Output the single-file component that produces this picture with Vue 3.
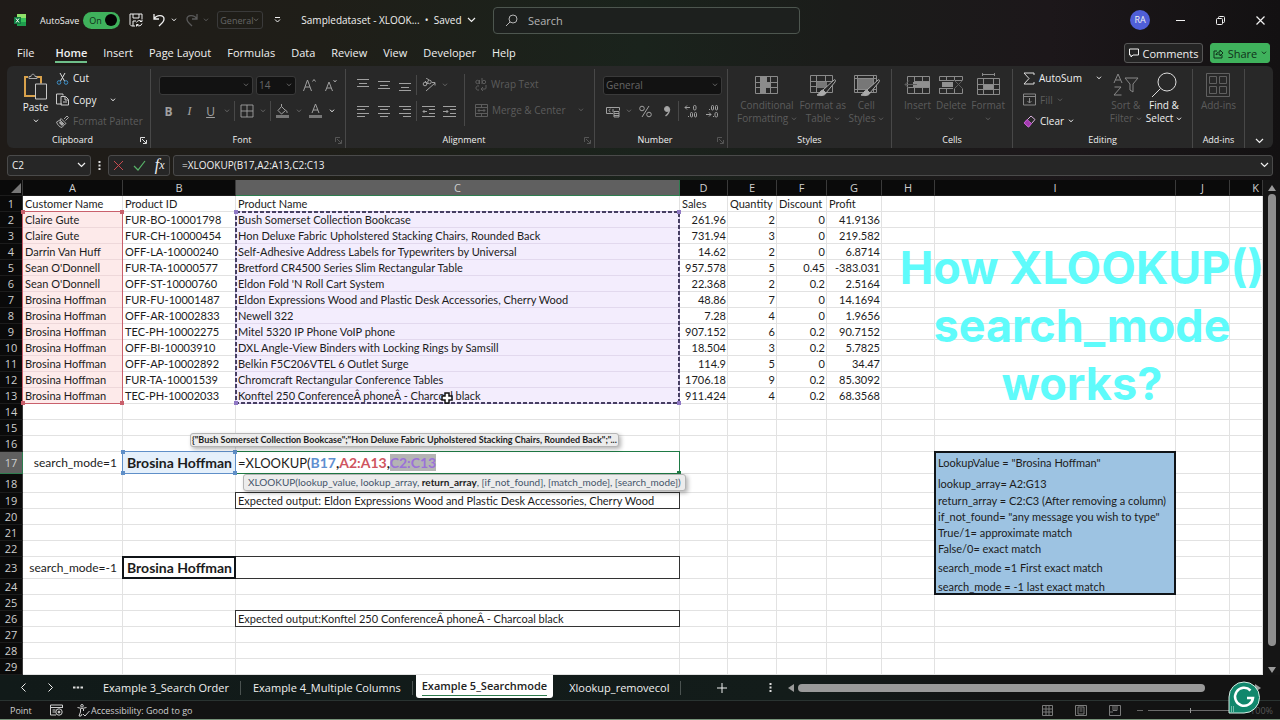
<template>
  <div class="workbook">
    <header class="title-bar">
      <div class="title-left">
        <Icon name="excel" class="app-logo" />
        <label class="autosave">
          <span>AutoSave</span>
          <input type="checkbox" checked class="sr-only" />
          <span class="toggle">On<i class="knob"></i></span>
        </label>
        <button class="plain save" aria-label="Save"><Icon name="save" /></button>
        <button class="plain" aria-label="Undo"><Icon name="undo" /><Icon name="chev" /></button>
        <button class="plain dim" aria-label="Redo"><Icon name="redo" /><Icon name="chev" /></button>
        <span class="picker quick-format">
          <select aria-label="Quick number format"><option>General</option></select>
          <Icon name="chev" />
        </span>
        <button class="plain customize" aria-label="Customize toolbar"><Icon name="customize" /></button>
        <button class="plain doc-name">Sampledataset - XLOOK... &nbsp;•&nbsp; Saved <Icon name="chevWide" /></button>
      </div>
      <label class="search">
        <Icon name="search" />
        <input type="text" placeholder="Search" aria-label="Search" />
      </label>
      <div class="window-controls">
        <span class="avatar">RA</span>
        <button class="plain" aria-label="Minimize"><Icon name="minimize" /></button>
        <button class="plain" aria-label="Restore"><Icon name="restore" /></button>
        <button class="plain" aria-label="Close"><Icon name="close" /></button>
      </div>
    </header>

    <nav class="menu">
      <button v-for="m in menus" :key="m" class="menu-item" :class="{ active: m === 'Home' }">{{ m }}</button>
      <span class="spacer"></span>
      <button class="comments"><Icon name="comment" />Comments</button>
      <button class="share"><Icon name="share" />Share<Icon name="chev" /></button>
    </nav>

    <section class="ribbon">
      <div class="group">
        <div class="group-body clipboard">
          <button class="big paste"><Icon name="paste" /><span>Paste<br /><Icon name="chev" /></span></button>
          <div class="stack">
            <button class="line"><Icon name="cut" />Cut</button>
            <button class="line"><Icon name="copy" />Copy<Icon name="chev" class="far-chev" /></button>
            <button class="line off"><Icon name="painter" />Format Painter</button>
          </div>
        </div>
        <div class="group-label with-launcher">Clipboard<Icon name="launcher" class="launcher" /></div>
      </div>

      <div class="group">
        <div class="group-body rows">
          <div class="tools font-row">
            <span class="picker font-name"><select aria-label="Font"><option></option></select><Icon name="chev" /></span>
            <span class="picker font-size"><select aria-label="Font size"><option>14</option></select><Icon name="chev" /></span>
            <button class="tool" aria-label="Increase font size"><Icon name="grow" /></button>
            <button class="tool" aria-label="Decrease font size"><Icon name="shrink" /></button>
          </div>
          <div class="tools">
            <button class="tool glyph"><b>B</b></button>
            <button class="tool glyph italic"><i>I</i></button>
            <button class="tool glyph"><u>U</u></button>
            <button class="tool narrow" aria-label="Underline options"><Icon name="chev" /></button>
            <i class="sep"></i>
            <button class="tool" aria-label="Borders"><Icon name="borders" /></button>
            <button class="tool narrow" aria-label="Border options"><Icon name="chev" /></button>
            <i class="sep"></i>
            <button class="tool" aria-label="Fill color"><Icon name="bucket" /></button>
            <button class="tool narrow" aria-label="Fill options"><Icon name="chev" /></button>
            <button class="tool" aria-label="Font color"><Icon name="fontColor" /></button>
            <button class="tool narrow lit" aria-label="Font color options"><Icon name="chev" /></button>
          </div>
        </div>
        <div class="group-label with-launcher">Font<Icon name="launcher" class="launcher dim" /></div>
      </div>

      <div class="group">
        <div class="group-body align">
          <div class="rows">
            <div class="tools">
              <button class="tool" aria-label="Top align"><Icon name="alignTop" /></button>
              <button class="tool" aria-label="Middle align"><Icon name="alignMid" /></button>
              <button class="tool" aria-label="Bottom align"><Icon name="alignBottom" /></button>
              <i class="sep"></i>
              <button class="tool" aria-label="Orientation"><Icon name="orient" /></button>
              <button class="tool narrow" aria-label="Orientation options"><Icon name="chev" /></button>
            </div>
            <div class="tools">
              <button class="tool" aria-label="Align left"><Icon name="left" /></button>
              <button class="tool" aria-label="Center"><Icon name="center" /></button>
              <button class="tool" aria-label="Align right"><Icon name="right" /></button>
              <i class="sep"></i>
              <button class="tool" aria-label="Decrease indent"><Icon name="outdent" /></button>
              <button class="tool" aria-label="Increase indent"><Icon name="indent" /></button>
            </div>
          </div>
          <i class="sep tall"></i>
          <div class="rows wrap-col">
            <button class="line off"><Icon name="wrap" />Wrap Text</button>
            <button class="line off"><Icon name="merge" />Merge &amp; Center<Icon name="chev" class="far-chev" /></button>
          </div>
        </div>
        <div class="group-label with-launcher">Alignment<Icon name="launcher" class="launcher dim" /></div>
      </div>

      <div class="group">
        <div class="group-body rows">
          <div class="tools number-row">
            <span class="picker number-format"><select aria-label="Number format"><option>General</option></select><Icon name="chev" /></span>
          </div>
          <div class="tools">
            <button class="tool" aria-label="Accounting format"><Icon name="money" /></button>
            <button class="tool narrow" aria-label="Accounting options"><Icon name="chev" /></button>
            <button class="tool" aria-label="Percent style"><Icon name="percent" /></button>
            <button class="tool" aria-label="Comma style"><Icon name="comma" /></button>
            <i class="sep"></i>
            <button class="tool" aria-label="Increase decimal"><Icon name="decInc" /></button>
            <button class="tool" aria-label="Decrease decimal"><Icon name="decDec" /></button>
          </div>
        </div>
        <div class="group-label with-launcher">Number<Icon name="launcher" class="launcher dim" /></div>
      </div>

      <div class="group">
        <div class="group-body bigs">
          <button class="big off"><Icon name="conditional" /><span>Conditional<br />Formatting <Icon name="chev" /></span></button>
          <button class="big off"><Icon name="formatTable" /><span>Format as<br />Table <Icon name="chev" /></span></button>
          <button class="big off"><Icon name="cellStyles" /><span>Cell<br />Styles <Icon name="chev" /></span></button>
        </div>
        <div class="group-label">Styles</div>
      </div>

      <div class="group">
        <div class="group-body bigs cells">
          <button class="big off"><Icon name="insert" /><span>Insert<br /><Icon name="chev" /></span></button>
          <button class="big off"><Icon name="delete" /><span>Delete<br /><Icon name="chev" /></span></button>
          <button class="big off"><Icon name="format" /><span>Format<br /><Icon name="chev" /></span></button>
        </div>
        <div class="group-label">Cells</div>
      </div>

      <div class="group">
        <div class="group-body editing">
          <div class="stack">
            <button class="line"><Icon name="sigma" />AutoSum<Icon name="chev" class="far-chev" /></button>
            <button class="line off"><Icon name="fill" />Fill <Icon name="chev" /></button>
            <button class="line"><Icon name="eraser" />Clear <Icon name="chev" /></button>
          </div>
          <button class="big off"><Icon name="sort" /><span>Sort &amp;<br />Filter <Icon name="chev" /></span></button>
          <button class="big"><Icon name="find" /><span>Find &amp;<br />Select <Icon name="chev" /></span></button>
        </div>
        <div class="group-label">Editing</div>
      </div>

      <div class="group">
        <div class="group-body bigs single">
          <button class="big off"><Icon name="addins" /><span>Add-ins</span></button>
        </div>
        <div class="group-label">Add-ins</div>
      </div>
      <button class="plain collapse" aria-label="Collapse ribbon"><Icon name="chevWide" /></button>
    </section>

    <section class="formula-bar">
      <div class="name-box">
        <input type="text" value="C2" aria-label="Name box" />
        <Icon name="chevWide" />
      </div>
      <Icon name="dots" class="grip" />
      <div class="formula-actions">
        <button class="plain" aria-label="Cancel"><Icon name="cancel" /></button>
        <button class="plain" aria-label="Enter"><Icon name="accept" /></button>
        <button class="plain fx" aria-label="Insert function"><i>f</i><sub>x</sub></button>
      </div>
      <div class="formula-input">
        <input type="text" value="=XLOOKUP(B17,A2:A13,C2:C13" aria-label="Formula" />
        <Icon name="chevWide" />
      </div>
    </section>

    <main class="sheet-area">
      <div class="sheet">
        <table>
          <colgroup>
            <col class="col-head" />
            <col v-for="c in columns" :key="c.id" :style="c.w ? { width: c.w + 'px' } : null" />
          </colgroup>
          <thead>
            <tr>
              <th class="corner"><Icon name="corner" /></th>
              <th v-for="c in columns" :key="c.id" :class="{ picked: c.id === 'C', clipped: c.id === 'K' }">{{ c.id }}</th>
            </tr>
          </thead>
          <tbody>
            <tr v-for="(r, i) in rows" :key="i" :style="{ height: r.h + 'px' }">
              <th :class="{ picked: i === 16 }">{{ i + 1 }}</th>
              <td v-for="c in columns" :key="c.id" :class="cellClass(c.id, i + 1)">
                <span v-if="c.id === 'C' && i === 16" class="formula">=XLOOKUP(<b class="ref-blue">B17</b><b>,</b><b class="ref-red">A2:A13</b><b>,</b><b class="ref-purple">C2:C13</b></span>
                <template v-else>{{ r[c.id] }}</template>
              </td>
            </tr>
          </tbody>
        </table>

        <div v-for="r in ranges" :key="r.from" class="range" :class="r.kind" :style="rangeStyle(r.from, r.to)">
          <svg v-if="r.kind === 'marching'" class="ants" width="100%" height="100%" aria-hidden="true">
            <rect width="100%" height="100%" />
          </svg>
          <template v-if="r.handles"><i class="h tl"></i><i class="h tr"></i><i class="h bl"></i></template>
          <i v-if="r.handles || r.kind === 'editing-cell'" class="h br"></i>
        </div>

        <div class="value-tip">{"Bush Somerset Collection Bookcase";"Hon Deluxe Fabric Upholstered Stacking Chairs, Rounded Back";"...</div>
        <div class="syntax-tip">XLOOKUP(lookup_value, lookup_array, <b>return_array</b>, [if_not_found], [match_mode], [search_mode])</div>
        <h1 class="caption">How XLOOKUP()<br />search_mode<br />works?</h1>
        <Icon name="cross" class="cursor" />
      </div>
      <div class="v-scroll"><Icon name="triUp" /><i class="thumb"></i><Icon name="triDown" /></div>
    </main>

    <footer class="sheet-tabs">
      <button class="plain nav" aria-label="Previous sheet"><Icon name="prev" /></button>
      <button class="plain nav" aria-label="Next sheet"><Icon name="next" /></button>
      <button class="plain nav more" aria-label="More sheets"><Icon name="more" /></button>
      <button v-for="t in tabs" :key="t" class="tab" :class="{ current: t === 'Example 5_Searchmode' }"><span>{{ t }}</span></button>
      <button class="plain add" aria-label="New sheet"><Icon name="plus" /></button>
      <Icon name="dots" class="grip" />
      <div class="h-scroll"><Icon name="triLeft" /><i class="thumb"></i></div>
      <Icon name="triRight" class="end-arrow" />
    </footer>

    <div class="status-bar">
      <span class="mode-name">Point</span>
      <Icon name="macro" />
      <button class="plain access"><Icon name="access" />Accessibility: Good to go</button>
      <span class="spacer"></span>
      <button class="plain view" aria-label="Normal view"><Icon name="viewGrid" /></button>
      <button class="plain view" aria-label="Page layout view"><Icon name="viewPage" /></button>
      <button class="plain view" aria-label="Page break view"><Icon name="viewBreak" /></button>
      <button class="plain minus" aria-label="Zoom out"><Icon name="minus" /></button>
      <input type="range" min="0" max="100" value="50" aria-label="Zoom" class="zoom" />
      <span class="percent">100%</span>
    </div>
    <Icon name="grammarly" class="assistant" />
  </div>
</template>

<script setup>
import { h } from 'vue'

const table = '<path d="M1.500 2.500h22v17h-22zM1.500 8.500h22M1.500 13.500h22M7.500 2.500v17M16.500 2.500v17" stroke="#8a8a8a"/>'
const brush = '<path d="M25 7 14 17l3 3 9-11c1-2 0-3-1-2z" fill="#282828" stroke="#aaa"/><path d="M14 17c-3 0-3 4-6 5 3 1 8 1 9-2z" fill="#aaa" stroke="#aaa"/>'

// name: [width, height, markup]
const icons = {
  excel: [12, 14, '<path d="M3 1h9v12H3z" fill="#1f9d4d" stroke="none"/><path d="M3 1h9v4H3z" fill="#8fe26a" stroke="none"/><path d="M7 5h5v4H7z" fill="#36c25a" stroke="none"/><path d="M0 4h7v7H0z" fill="#107c41" stroke="none"/><path d="m2 5.500 3 4m0-4-3 4" stroke="#fff"/>'],
  save: [14, 14, '<path d="M6 13H2.500L1 11.500V1h12v5M4 1v4h6V1M4 13V8h3"/><path d="M7.500 9.500a3 3 0 0 1 5-1M13 6.500v2h-2M13 10.500a3 3 0 0 1-5 1.500M7.500 13.500v-2h2"/>'],
  undo: [13, 14, '<path d="M1 1v5h5M1 6c3-5 10-4 10 0 0 3-3 5-5 7" stroke-width="1.300"/>'],
  redo: [13, 14, '<path d="M12 1v5H7M12 6C9 1 2 2 2 6c0 3 3 5 5 7" stroke-width="1.300"/>'],
  chev: [6, 4, '<path d="m1 .7 2 2.100 2-2.100"/>'],
  chevWide: [9, 6, '<path d="m1 1 3.500 3.500L8 1" stroke-width="1.200"/>'],
  customize: [7, 6, '<path d="M1 .5h5M1 2.500 3.500 5 6 2.500"/>'],
  search: [13, 13, '<circle cx="8" cy="5" r="4"/><path d="M5 8 1 12"/>'],
  minimize: [9, 9, '<path d="M0 4.500h9"/>'],
  restore: [9, 9, '<rect x=".5" y="2.500" width="6" height="6" rx="1"/><path d="M2.500 2.500v-1q0-1 1-1h4q1 0 1 1v4q0 1-1 1h-1"/>'],
  close: [9, 9, '<path d="m.5.5 8 8m0-8-8 8" stroke-width="1.200"/>'],
  comment: [10, 10, '<path d="M.5 1h9v6H4L2 9V7H.5z"/>'],
  share: [11, 11, '<path d="M4 3H1v7h8V7M3 7c0-2 2-3 4-3V2l3 3-3 3V6C5 6 4 6 3 7z"/>'],
  paste: [25, 27, '<path d="M5 3.500H2v19h10M14 3.500h4V10" stroke="#d9a24c" stroke-width="2"/><path d="M6 5V3h2c0-3 4-3 4 0h2v2z" stroke="#aaa"/><path d="M12.500 10.500h11v15h-11z" stroke="#c8c8c8" fill="#282828"/>'],
  cut: [13, 13, '<path d="M4 1l4.500 8M9 1 4.500 9" stroke="#ddd"/><circle cx="3" cy="10.500" r="1.800" stroke="#3d8fc7"/><circle cx="10" cy="10.500" r="1.800" stroke="#3d8fc7"/>'],
  copy: [13, 13, '<path d="M6 11H.5V1H7v1.500M5 3.500h4.500l3 3V12H5zM9 4v3h3M7 9h4" stroke="#ccc"/>'],
  painter: [13, 13, '<path d="m8 4 3-3 1.500 1.500-3 3M5 3.500l5 5-1.500 1L4 5zM4 5 .5 7c1 3 3 5 5.500 5.500l2.500-3" stroke="#aaa"/><path d="m3 8 3 3 2-2-4-3z" fill="#aaa" stroke="none"/>'],
  launcher: [7, 7, '<path d="M.5 5V.5H5M2 2l4 4M6.500 3v3.500H3" stroke-width=".900"/>'],
  grow: [13, 14, '<path d="m.5 13 4-11 4 11M2 9h5M9.500 3.500l1.500-2 1.500 2"/>'],
  shrink: [13, 14, '<path d="m1.500 13 3.500-9 3.500 9M3 10h4M9.500 2l1.500 2 1.500-2"/>'],
  borders: [14, 14, '<path d="M1 1h12v12H1zM7 1v12M1 7h12" stroke-width=".900"/>'],
  bucket: [13, 14, '<path d="m5.500 2.500 4 4-4 3.500-3.500-3.500zM5.500 2.500V0M9.500 6c2 1 1.500 3 1.500 3"/><path d="M0 11h13v3H0z" fill="#777" stroke="none"/>'],
  fontColor: [13, 14, '<path d="m3 9 3.500-9L10 9M4 6h5"/><path d="M0 11h13v3H0z" fill="#777" stroke="none"/>'],
  alignTop: [12, 14, '<path d="M0 1.500h12M2 5.500h8M0 8.500h12"/>'],
  alignMid: [12, 14, '<path d="M0 3.500h12M2 7.500h8M0 10.500h12"/>'],
  alignBottom: [12, 14, '<path d="M0 5.500h12M2 9.500h8M0 12.500h12"/>'],
  left: [12, 13, '<path d="M0 1.500h12M0 4.500h8M0 8.500h12M0 11.500h8"/>'],
  center: [12, 13, '<path d="M0 1.500h12M2 4.500h8M0 8.500h12M2 11.500h8"/>'],
  right: [12, 13, '<path d="M0 1.500h12M4 4.500h8M0 8.500h12M4 11.500h8"/>'],
  outdent: [13, 13, '<path d="M0 1.500h13M7 4.500h6M7 8.500h6M0 11.500h13M5 6.500H1M2.500 5 1 6.500 2.500 8"/>'],
  indent: [13, 13, '<path d="M0 1.500h13M7 4.500h6M7 8.500h6M0 11.500h13M0 6.500h5M3.500 5 5 6.500 3.500 8"/>'],
  orient: [14, 14, '<circle cx="3" cy="6" r="1.800"/><path d="m3 3 3 3"/><circle cx="7.500" cy="4" r="1.800"/><path d="m4 0 3 2M4 13l9-8M10 4.500h3v3"/>'],
  wrap: [12, 13, '<circle cx="2.500" cy="4" r="1.700"/><path d="M4.500 2v4M7 0v6"/><circle cx="9" cy="4" r="1.700"/><path d="M4 8c-4-1-4 5 0 4M11 7v3q0 1-1 1H6M8 9l-2 2 2 2"/>'],
  merge: [13, 13, '<path d="M.5.5h12v12H.5zM.5 3.500h12M.5 9.500h12M6.500 1v2.500M6.500 9.500V13M3 6.500h7M4.500 5 3 6.500 4.500 8M8.500 5 10 6.500 8.500 8"/>'],
  money: [14, 13, '<path d="M7 8.500H.5v-6h13v3M4.500 7c-2 0-2-3 0-3M7 4v3"/><path d="M8 6.500h5v5.500H8z" fill="#282828"/><path d="M8 8.500h5M8 10.500h5"/>'],
  percent: [13, 13, '<circle cx="3" cy="3.500" r="2.300"/><circle cx="10" cy="9.500" r="2.300"/><path d="M10 1 3 12"/>'],
  comma: [8, 13, '<circle cx="4" cy="4" r="2.500" fill="#a8a8a8"/><path d="M6.500 4c0 4-2 5.500-4 7" stroke-width="1.500"/>'],
  decInc: [14, 14, '<path d="M1 3.500h5M3 1.500l-2 2 2 2M4 12.500h1"/><rect x="9.500" y="1.500" width="2.500" height="4.500" rx="1.200"/><rect x="6.500" y="8.500" width="2" height="4.500" rx="1"/><rect x="10.500" y="8.500" width="2" height="4.500" rx="1"/>'],
  decDec: [14, 14, '<path d="M1 10.500h5M4 8.500l2 2-2 2M4 5.500h1M8 12.500h1"/><rect x="6.500" y="1.500" width="2" height="4.500" rx="1"/><rect x="10.500" y="1.500" width="2" height="4.500" rx="1"/><rect x="10" y="8.500" width="2.500" height="4.500" rx="1.200"/>'],
  conditional: [25, 22, table + '<path d="M6 3h7v5h4v5h-5v6H6z" fill="#8c8c8c" stroke="none"/>'],
  formatTable: [27, 24, table + '<path d="M8 9h10v6H8z" fill="#777" stroke="none"/>' + brush],
  cellStyles: [27, 24, '<path d="M1.500 2.500h22v17h-22zM1.500 5.500h22M4.500 2.500v17M20.500 2.500v17M1.500 16.500h22" stroke="#8a8a8a"/><path d="M5 6h15v10H5z" fill="#777" stroke="none"/>' + brush],
  insert: [27, 22, '<path d="M3.500 2.500h22v17h-22zM3.500 13.500h22M10.500 2.500v17M18.500 2.500v17M10 7.500h16" stroke="#8a8a8a"/><path d="M9 8h17v5H9z" fill="#909090" stroke="none"/><path d="M13 10.500H1M5 6.500l-4 4 4 4"/>'],
  delete: [26, 22, '<path d="M1.500 6.500v-4h23v4M1.500 15v4.500h23V15M8.500 2v4M16.500 2v4M8.500 15v4M16.500 15v4M1 6.500h23M1 14.500h14" stroke="#8a8a8a"/><path d="M4 8h11v5H4z" fill="#909090" stroke="none"/><path d="m16 6 9 9m0-9-9 9"/>'],
  format: [24, 24, '<path d="M1.500 5.500h22v16h-22zM1.500 11.500h22M1.500 16.500h22M7.500 5v16M17.500 5v16M6 1.500h12M6.500 0v3M18.500 0v3" stroke="#8a8a8a"/><path d="M8 12h9v4H8z" fill="#909090" stroke="none"/>'],
  sigma: [12, 13, '<path d="M11 3V1H1l5 5.500L1 12h10v-2" stroke="#ddd"/>'],
  fill: [13, 13, '<path d="M.5 1h12v11H.5zM.5 3.500h12M6.500 5v5M4.500 8l2 2 2-2" stroke="#888"/>'],
  eraser: [13, 13, '<path d="m8 1 4 3.500-6.500 7.500-4.500-4z" stroke="#d9b0de"/><path d="M4 4.500 1 8l4.500 4L8.500 8.500z" fill="#a33ab0" stroke="#c45ad0"/>'],
  sort: [26, 26, '<path d="m1 11 4-9 4 9M2.500 8h5M1.500 15H8l-7 8h7.500M12 6h13l-5 6v8l-3-2v-6z" stroke="#888"/>'],
  find: [26, 26, '<circle cx="16" cy="10" r="9" stroke="#ddd"/><path d="M9.500 16.500 1 25" stroke="#ddd"/>'],
  addins: [24, 26, '<path d="M.5 1.500h23v23H.5zM3.500 4.500h7v7h-7zM13.500 4.500h7v7h-7zM3.500 14.500h7v7h-7zM13.500 14.500h7v7h-7z" stroke="#606060"/>'],
  dots: [3, 13, '<path d="M.5 2h2v2h-2zM.5 5.500h2v2h-2zM.5 9h2v2h-2z" fill="#ddd" stroke="none"/>'],
  cancel: [11, 11, '<path d="m1 1 9 9m0-9-9 9" stroke="#c94a4f"/>'],
  accept: [13, 11, '<path d="m1 6 4 4 7-9" stroke="#58b368" stroke-width="1.200"/>'],
  corner: [12, 12, '<path d="M11 1v10H1z" fill="#777" stroke="none"/>'],
  triUp: [8, 6, '<path d="M4 0 8 6H0z" fill="#9a9a9a" stroke="none"/>'],
  triDown: [8, 6, '<path d="M0 0h8L4 6z" fill="#9a9a9a" stroke="none"/>'],
  triLeft: [6, 8, '<path d="M6 0v8L0 4z" fill="#9a9a9a" stroke="none"/>'],
  triRight: [6, 8, '<path d="M0 0v8l6-4z" fill="#9a9a9a" stroke="none"/>'],
  prev: [5, 9, '<path d="M4.500.5.500 4.500l4 4"/>'],
  next: [5, 9, '<path d="m.5.5 4 4-4 4"/>'],
  more: [10, 3, '<path d="M0 .5h2.500v2H0zM3.700.5h2.500v2H3.700zM7.500.5H10v2H7.500z" fill="#ddd" stroke="none"/>'],
  plus: [10, 10, '<path d="M5 0v10M0 5h10"/>'],
  macro: [13, 12, '<path d="M6 11H.5V1h12v3M.5 3.500h12M2.500 6h3M2.500 8h3"/><circle cx="9" cy="8" r="3.200"/><circle cx="9" cy="8" r="1" fill="#ccc"/>'],
  access: [13, 13, '<circle cx="5" cy="1.800" r="1.300"/><path d="M.5 3.500q4.500 2 9 0M3.500 5v3L2 12M6.500 5v2M6 10l2 2 4.500-5M2 12h2l1-2"/>'],
  viewGrid: [11, 11, '<path d="M.5.5h10v10H.5zM.5 4h10M.5 7h10M4 .5v10M7 .5v10"/>'],
  viewPage: [12, 11, '<path d="M.5.5h11v10H.5zM3 2h6v7H3zM4.500 4h3M4.500 6h3"/>'],
  viewBreak: [12, 11, '<path d="M.5.5h11v10H.5zM4 .5v5h4v-5M.5 7H4M6 .5v5"/>'],
  minus: [6, 3, '<path d="M0 1.500h6"/>'],
  cross: [12, 12, '<path d="M4 1h4v3h3v4H8v3H4V8H1V4h3z" fill="#fff" stroke="#111" stroke-width="1.500"/>'],
  grammarly: [32, 33, '<path d="M16 1a15 15 0 1 1 0 31H1V16A15 15 0 0 1 16 1z" fill="#11876c" stroke="#d7efe6"/><path d="M22.500 9.500a9 9 0 1 0 2.500 7.500h-6" stroke="#fff" stroke-width="2.500"/><path d="M3 26h1M5 26h1M3 28h1M5 28h1M3 30h1M5 30h1" stroke="#d7efe6"/>']
}

const Icon = ({ name }) => {
  const [w, ht, markup] = icons[name]
  return h('svg', {
    width: w,
    height: ht,
    viewBox: `0 0 ${w} ${ht}`,
    fill: 'none',
    stroke: 'currentColor',
    'aria-hidden': 'true',
    innerHTML: markup
  })
}
Icon.props = ['name']

const menus = ['File', 'Home', 'Insert', 'Page Layout', 'Formulas', 'Data', 'Review', 'View', 'Developer', 'Help']
const tabs = ['Example 3_Search Order', 'Example 4_Multiple Columns', 'Example 5_Searchmode', 'Xlookup_removecol']

const HEAD_W = 23
const HEAD_H = 16

// K takes whatever room is left
const columns = [
  { id: 'A', w: 100 },
  { id: 'B', w: 113 },
  { id: 'C', w: 444 },
  { id: 'D', w: 48 },
  { id: 'E', w: 49 },
  { id: 'F', w: 50 },
  { id: 'G', w: 55 },
  { id: 'H', w: 53 },
  { id: 'I', w: 241 },
  { id: 'J', w: 54 },
  { id: 'K' }
]

const orders = [
  ['Customer Name', 'Product ID', 'Product Name', 'Sales', 'Quantity', 'Discount', 'Profit'],
  ['Claire Gute', 'FUR-BO-10001798', 'Bush Somerset Collection Bookcase', '261.96', '2', '0', '41.9136'],
  ['Claire Gute', 'FUR-CH-10000454', 'Hon Deluxe Fabric Upholstered Stacking Chairs, Rounded Back', '731.94', '3', '0', '219.582'],
  ['Darrin Van Huff', 'OFF-LA-10000240', 'Self-Adhesive Address Labels for Typewriters by Universal', '14.62', '2', '0', '6.8714'],
  ["Sean O'Donnell", 'FUR-TA-10000577', 'Bretford CR4500 Series Slim Rectangular Table', '957.578', '5', '0.45', '-383.031'],
  ["Sean O'Donnell", 'OFF-ST-10000760', "Eldon Fold 'N Roll Cart System", '22.368', '2', '0.2', '2.5164'],
  ['Brosina Hoffman', 'FUR-FU-10001487', 'Eldon Expressions Wood and Plastic Desk Accessories, Cherry Wood', '48.86', '7', '0', '14.1694'],
  ['Brosina Hoffman', 'OFF-AR-10002833', 'Newell 322', '7.28', '4', '0', '1.9656'],
  ['Brosina Hoffman', 'TEC-PH-10002275', 'Mitel 5320 IP Phone VoIP phone', '907.152', '6', '0.2', '90.7152'],
  ['Brosina Hoffman', 'OFF-BI-10003910', 'DXL Angle-View Binders with Locking Rings by Samsill', '18.504', '3', '0.2', '5.7825'],
  ['Brosina Hoffman', 'OFF-AP-10002892', 'Belkin F5C206VTEL 6 Outlet Surge', '114.9', '5', '0', '34.47'],
  ['Brosina Hoffman', 'FUR-TA-10001539', 'Chromcraft Rectangular Conference Tables', '1706.18', '9', '0.2', '85.3092'],
  ['Brosina Hoffman', 'TEC-PH-10002033', 'Konftel 250 ConferenceÂ phoneÂ - Charcoal black', '911.424', '4', '0.2', '68.3568']
].map(([A, B, C, D, E, F, G]) => ({ h: 16, A, B, C, D, E, F, G }))

const rows = [
  ...orders,
  { h: 16 },
  { h: 16 },
  { h: 16 },
  { h: 22, A: 'search_mode=1', B: 'Brosina Hoffman', I: 'LookupValue = "Brosina Hoffman"' },
  { h: 19, I: 'lookup_array= A2:G13' },
  { h: 16, C: 'Expected output: Eldon Expressions Wood and Plastic Desk Accessories, Cherry Wood', I: 'return_array = C2:C3 (After removing a column)' },
  { h: 16, I: 'if_not_found= "any message you wish to type"' },
  { h: 16, I: 'True/1= approximate match' },
  { h: 16, I: 'False/0= exact match' },
  { h: 22, A: 'search_mode=-1', B: 'Brosina Hoffman', I: 'search_mode =1 First exact match' },
  { h: 16, I: 'search_mode = -1 last exact match' },
  { h: 16 },
  { h: 16, C: 'Expected output:Konftel 250 ConferenceÂ phoneÂ - Charcoal black' },
  { h: 16 },
  { h: 16 },
  { h: 16 }
]

const ranges = [
  { from: 'A2', to: 'A13', kind: 'red', handles: true },
  { from: 'C2', to: 'C13', kind: 'marching', handles: true },
  { from: 'C17', to: 'C17', kind: 'editing-cell' },
  { from: 'B17', to: 'B17', kind: 'blue', handles: true },
  { from: 'C19', to: 'C19', kind: 'thin' },
  { from: 'C23', to: 'C23', kind: 'thin' },
  { from: 'B23', to: 'B23', kind: 'thick' },
  { from: 'C26', to: 'C26', kind: 'thin' },
  { from: 'I17', to: 'I24', kind: 'thick' }
]

const sum = (list, key) => list.reduce((total, item) => total + item[key], 0)

function rangeStyle(from, to) {
  const c0 = columns.findIndex((c) => c.id === from[0])
  const c1 = columns.findIndex((c) => c.id === to[0])
  const r0 = Number(from.slice(1)) - 1
  const r1 = Number(to.slice(1))
  return {
    left: HEAD_W + sum(columns.slice(0, c0), 'w') - 1 + 'px',
    top: HEAD_H + sum(rows.slice(0, r0), 'h') - 1 + 'px',
    width: sum(columns.slice(c0, c1 + 1), 'w') + 1 + 'px',
    height: sum(rows.slice(r0, r1), 'h') + 1 + 'px'
  }
}

function cellClass(col, row) {
  return {
    pink: col === 'A' && row > 1 && row < 14,
    lilac: col === 'C' && row > 1 && row < 14,
    sky: col === 'B' && row === 17,
    note: col === 'I' && row > 16 && row < 25,
    num: 'DEFG'.includes(col) && row > 1,
    mode: col === 'A' && row > 16,
    strong: col === 'B' && row > 16
  }
}
</script>

<style>
body {
  background: #151515;
}
</style>

<style scoped>
* {
  box-sizing: border-box;
}

.workbook {
  position: relative;
  display: flex;
  flex-direction: column;
  height: 100vh;
  overflow: hidden;
  border-bottom: 1px solid #78937a;
  background: linear-gradient(90deg, #1f1b18 0%, #1f1e18 25%, #1a231c 50%, #1b1c1a 66%, #1c171a 82%, #131112 100%);
  color: #f0f0f0;
  font-family: 'Open Sans', 'Noto Sans', sans-serif;
  font-size: 10px;
}

button,
input,
select {
  margin: 0;
  padding: 0;
  border: 0;
  background: none;
  color: inherit;
  font: inherit;
  outline: none;
}

svg {
  flex: none;
}

.plain {
  display: flex;
  align-items: center;
}

.spacer {
  flex: 1;
}

.sr-only {
  position: absolute;
  opacity: 0;
}

.dim {
  color: #5a5a5a;
}

/* title bar */
.title-bar {
  display: grid;
  grid-template-columns: 493fr 307fr 480fr;
  align-items: center;
  height: 40px;
}

.title-left {
  display: flex;
  align-items: center;
  padding-left: 14px;
  white-space: nowrap;
}

.autosave {
  display: flex;
  align-items: center;
  gap: 4px;
  margin: 0 9px 0 14px;
  font-size: 9px;
}

.toggle {
  display: flex;
  align-items: center;
  justify-content: space-between;
  width: 37px;
  height: 17px;
  padding: 0 3px 0 6px;
  border-radius: 9px;
  background: #3fb25c;
  color: #10301a;
}

.knob {
  width: 12px;
  height: 12px;
  border-radius: 50%;
  background: #050505;
}

.title-left .plain {
  gap: 5px;
  margin-right: 8px;
}

.title-left .save {
  margin-right: 10px;
}

.picker {
  position: relative;
  display: flex;
  flex: none;
  align-items: center;
  border: 1px solid #3a3a3a;
  border-radius: 3px;
  background: #121212;
  color: #666;
}

.picker select {
  flex: 1;
  min-width: 0;
  height: 100%;
  padding-left: 2px;
  appearance: none;
}

.picker svg {
  position: absolute;
  right: 3px;
  pointer-events: none;
}

.quick-format {
  width: 46px;
  height: 18px;
  font-size: 9px;
  background: transparent;
}

.title-left .customize {
  margin: 0 20px 0 11px;
}

.doc-name {
  font-size: 10px;
}

.search {
  display: flex;
  align-items: center;
  gap: 10px;
  height: 27px;
  padding: 0 11px;
  border: 1px solid #4d564f;
  border-radius: 4px;
  background: #1d201e;
  color: #b4b4b4;
}

.search input {
  flex: 1;
  font-size: 11px;
}

.search input::placeholder {
  color: #b4b4b4;
}

.window-controls {
  display: flex;
  align-items: center;
  justify-content: flex-end;
  gap: 31px;
  padding-right: 15px;
}

.avatar {
  width: 20px;
  height: 20px;
  margin-right: -5px;
  border-radius: 50%;
  background: #4f5fd8;
  font-size: 9px;
  line-height: 20px;
  text-align: center;
}

/* menu */
.menu {
  display: flex;
  align-items: center;
  gap: 16px;
  height: 26px;
  padding: 0 10px 0 17px;
}

.menu-item {
  height: 20px;
  border-bottom: 2px solid transparent;
  font-size: 11px;
  line-height: 20px;
}

.menu-item:first-child {
  margin-right: 5px;
}

.menu-item.active {
  border-color: #6fbf8a;
  font-weight: 600;
}

.comments,
.share {
  display: flex;
  align-items: center;
  justify-content: center;
  gap: 4px;
  height: 20px;
  border: 1px solid #565656;
  border-radius: 3px;
  font-size: 11px;
}

.comments {
  width: 79px;
  background: #242424;
}

.share {
  width: 60px;
  margin-left: -9px;
  border-color: #3fb25c;
  background: #3fb25c;
  color: #10301a;
}

/* ribbon */
.ribbon {
  display: grid;
  grid-template-columns: 144fr 195fr 249fr 133fr 164fr 121fr 180fr 52fr 28fr;
  height: 82px;
  margin: 0 7px;
  border-radius: 6px;
  background: #282828;
}

.group {
  display: flex;
  flex-direction: column;
  min-width: 0;
  margin: 3px 0 5px;
  border-right: 1px solid #484848;
}

.group-body {
  display: flex;
  height: 62px;
}

.group-label {
  position: relative;
  font-size: 9px;
  line-height: 17px;
  text-align: center;
}

.with-launcher {
  padding-right: 12px;
}

.group-label .launcher {
  position: absolute;
  right: 3px;
  top: 6px;
}

.stack {
  display: flex;
  flex: 1;
  flex-direction: column;
  justify-content: space-between;
  padding-bottom: 1px;
}

.line {
  display: flex;
  align-items: center;
  gap: 4px;
  height: 18px;
  white-space: nowrap;
}

.far-chev {
  margin-left: 10px;
}

.off {
  color: #5c5c5c;
}

.big {
  display: flex;
  flex-direction: column;
  align-items: center;
  line-height: 13px;
  white-space: nowrap;
}

.big > svg {
  height: 28px;
}

.big span svg {
  vertical-align: middle;
}

.clipboard {
  gap: 7px;
  padding-left: 15px;
}

.paste {
  width: 27px;
  padding-top: 4px;
}

.rows {
  flex-direction: column;
  padding: 6px 7px 0;
}

.tools {
  display: flex;
  align-items: center;
  height: 26px;
  color: #a0a0a0;
}

.rows .tools:first-child {
  height: 20px;
  margin-bottom: 3px;
}

.font-row,
.number-row {
  padding-left: 1px;
}

.tool {
  display: flex;
  flex: none;
  align-items: center;
  justify-content: center;
  width: 21px;
  height: 20px;
}

.glyph {
  font-size: 12px;
}

.italic {
  font-family: 'Liberation Serif', serif;
  font-size: 13px;
}

.narrow {
  width: 12px;
  color: #666;
}

.lit {
  color: #f0f0f0;
}

.sep {
  flex: none;
  width: 1px;
  height: 20px;
  margin: 0 1px;
  background: #484848;
}

.tall {
  height: 52px;
  margin-top: 5px;
}

.font-name {
  width: 94px;
  height: 19px;
  margin-right: 3px;
}

.font-size {
  width: 40px;
  height: 19px;
  margin-right: 3px;
}

.number-format {
  width: 119px;
  height: 19px;
}

.align .rows:first-child {
  width: 117px;
  padding-right: 0;
  padding-left: 6px;
}

.wrap-col {
  display: flex;
  gap: 8px;
  padding-left: 9px;
}

.wrap-col .far-chev {
  margin-left: 8px;
}

.bigs {
  justify-content: space-between;
  padding: 2px 7px 0 9px;
}

.cells {
  padding-left: 12px;
}

.single {
  justify-content: center;
  padding: 2px 0 0;
}

.editing {
  gap: 4px;
  padding: 0 10px;
}

.editing .big {
  flex: none;
  padding-top: 2px;
}

.collapse {
  align-self: end;
  justify-content: center;
  height: 24px;
}

/* formula bar */
.formula-bar {
  display: flex;
  align-items: center;
  height: 32px;
  padding: 2px 7px 0;
  font-size: 10px;
}

.name-box,
.formula-actions,
.formula-input {
  display: flex;
  align-items: center;
  height: 21px;
  border: 1px solid #4a4a4a;
  border-radius: 3px;
  background: #262626;
}

.name-box {
  width: 84px;
  padding: 0 4px;
}

.name-box input {
  flex: 1;
  min-width: 0;
}

.grip {
  margin: 0 7px;
}

.formula-actions {
  justify-content: space-around;
  width: 62px;
  margin-right: 3px;
}

.fx {
  font-family: 'Liberation Serif', serif;
  font-size: 16px;
  line-height: 16px;
}

.fx sub {
  font-size: 12px;
  font-style: italic;
}

.formula-input {
  flex: 1;
  padding: 0 3px 0 8px;
}

.formula-input input {
  flex: 1;
}

/* grid */
.sheet-area {
  display: flex;
  flex: 1;
  min-height: 0;
}

.sheet {
  position: relative;
  flex: 1;
  overflow: hidden;
  background: #fff;
  color: #1c1c1c;
  font-family: Lato, 'Open Sans', sans-serif;
  font-size: 11px;
}

table {
  width: 100%;
  border-collapse: separate;
  border-spacing: 0;
  table-layout: fixed;
}

.col-head {
  width: 23px;
}

th {
  height: 16px;
  padding: 0;
  border-right: 1px solid #3a3a3a;
  border-bottom: 1px solid #1c1c1c;
  background: #0a0a0a;
  color: #cfcfcf;
  font-family: 'Open Sans', sans-serif;
  font-size: 11px;
  font-weight: 400;
  line-height: 15px;
}

th.picked {
  border-color: #2e7d4f;
  background: #606060;
}

th.clipped {
  padding-right: 3px;
  text-align: right;
}

.corner svg {
  display: block;
  margin-left: auto;
}

td {
  padding: 0 2px;
  border-right: 1px solid #e2e2e2;
  border-bottom: 1px solid #e2e2e2;
  line-height: 15px;
  white-space: nowrap;
}

.num {
  padding-right: 1px;
  text-align: right;
}

td.pink {
  border-color: #eed8da;
  background: #fdeaea;
}

td.lilac {
  border-color: #e2d9ee;
  background: #f3edfd;
}

td.sky {
  background: #e5f0fb;
}

td.note {
  padding-left: 3px;
  border-color: #9dc3e2;
  background: #9dc3e2;
}

.mode {
  padding-right: 5px;
  font-size: 12px;
  text-align: right;
}

.strong {
  padding: 0 3px;
  font-size: 14px;
  font-weight: 700;
  line-height: 18px;
  text-align: right;
}

.formula {
  font-size: 13px;
  line-height: 18px;
}

.formula b {
  font-size: 14px;
}

.ref-blue {
  color: #5f8fd0;
}

.ref-red {
  color: #cf5560;
}

.ref-purple {
  background: #b4b4b4;
  color: #9b72d8;
}

.range {
  position: absolute;
  border: 1px solid #333;
  pointer-events: none;
}

.range.red {
  border-color: #c9606c;
}

.range.marching {
  border-color: #cbbce6;
}

.ants {
  display: block;
  overflow: visible;
}

.ants rect {
  fill: none;
  stroke: #463f62;
  stroke-width: 2px;
  stroke-dasharray: 4 2;
}

.range.editing-cell {
  border-color: #1f7a45;
}

.range.blue {
  border-color: #5f8fc8;
}

.range.thick {
  border: 2px solid #101418;
}

.h {
  position: absolute;
  width: 4px;
  height: 4px;
  background: #c9606c;
}

.marching .h {
  background: #8f78c4;
}

.blue .h {
  background: #5f8fc8;
}

.editing-cell .h {
  background: #1f7a45;
}

.tl,
.tr {
  top: -2px;
}

.bl,
.br {
  bottom: -2px;
}

.tl,
.bl {
  left: -2px;
}

.tr,
.br {
  right: -2px;
}

.value-tip,
.syntax-tip {
  position: absolute;
  border: 1px solid #b5b5b5;
  border-radius: 3px;
  background: #ececec;
  box-shadow: 2px 2px 4px rgba(0, 0, 0, 0.3);
  white-space: nowrap;
}

.value-tip {
  left: 190px;
  top: 253px;
  padding: 0 1px;
  font-size: 9px;
  font-weight: 700;
  line-height: 12px;
}

.syntax-tip {
  left: 243px;
  top: 294px;
  padding: 0 4px;
  color: #44546a;
  font-size: 10px;
  line-height: 15px;
}

.syntax-tip b {
  color: #222;
}

.caption {
  position: absolute;
  left: 895px;
  top: 59px;
  width: 374px;
  margin: 0;
  color: #5ffbfb;
  font-family: Inter, sans-serif;
  font-size: 45px;
  font-weight: 700;
  line-height: 58px;
  text-align: center;
  white-space: nowrap;
}

.cursor {
  position: absolute;
  left: 441px;
  top: 212px;
}

.v-scroll {
  display: flex;
  flex-direction: column;
  align-items: center;
  gap: 3px;
  width: 17px;
  padding: 5px 0 2px;
  background: #151515;
}

.v-scroll .thumb {
  flex: 1;
  width: 8px;
  margin-bottom: 18px;
  border-radius: 4px;
  background: #8e8e8e;
}

/* sheet tabs */
.sheet-tabs {
  display: flex;
  align-items: center;
  height: 26px;
  border-bottom: 1px solid #2a3331;
  background: linear-gradient(90deg, #111a19 0%, #131c1a 62%, #131313 78%);
}

.nav {
  justify-content: center;
  width: 27px;
  height: 20px;
}

.nav:first-child {
  margin-left: 10px;
}

.tab {
  position: relative;
  height: 25px;
  padding: 0 12px;
  font-size: 11px;
  line-height: 18px;
}

.tab::after {
  position: absolute;
  top: 6px;
  right: 0;
  width: 1px;
  height: 14px;
  background: #4a5250;
  content: '';
}

.tab.current {
  align-self: flex-start;
  height: 23px;
  margin: 0 4px 0 3px;
  padding: 0 6px;
  border-radius: 0 0 3px 3px;
  background: #fff;
  color: #222;
  font-weight: 600;
}

.tab.current::after {
  display: none;
}

.tab.current span {
  display: block;
  border-bottom: 1px solid #2e7d4f;
}

.add {
  margin-left: 36px;
}

.sheet-tabs .grip {
  margin: 0 16px 0 42px;
}

.h-scroll {
  display: flex;
  flex: 1;
  align-items: center;
  gap: 4px;
}

.h-scroll .thumb {
  flex: 1;
  height: 8px;
  border-radius: 4px;
  background: #9a9a9a;
}

.end-arrow {
  margin: 0 19px 0 50px;
}

/* status bar */
.status-bar {
  display: flex;
  align-items: center;
  height: 18px;
  padding: 0 7px 0 10px;
  background: #131313;
  color: #cfcfcf;
  font-size: 9px;
}

.mode-name {
  width: 40px;
}

.access {
  gap: 1px;
  margin-left: 14px;
}

.view {
  margin-right: 22px;
  color: #7a7a7a;
}

.minus {
  margin: 0 5px 0 -6px;
  color: #666;
}

.zoom {
  width: 84px;
  height: 10px;
  margin-right: 18px;
  appearance: none;
}

.zoom::-webkit-slider-runnable-track {
  height: 1px;
  background: #6a6a6a;
}

.zoom::-webkit-slider-thumb {
  width: 1px;
  height: 5px;
  margin-top: -2px;
  background: #999;
  appearance: none;
}

.percent {
  color: #555;
}

.assistant {
  position: absolute;
  right: 20px;
  bottom: 5px;
}
</style>
